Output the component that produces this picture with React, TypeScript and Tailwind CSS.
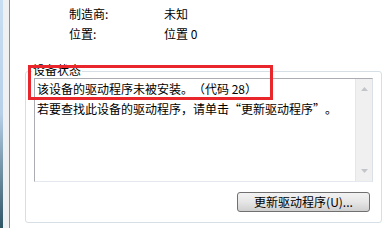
import React from 'react';

const font = { fontFamily: '"SimSun", "Noto Sans CJK SC", sans-serif' };

function ScrollArrow({ up }: { up?: boolean }) {
    return (
        <svg width="7" height="4" viewBox="0 0 7 4" className="block">
            {up ? <path d="M0 4 L3.5 0 L7 4 Z" fill="#c2c5c9" /> : <path d="M0 0 L3.5 4 L7 0 Z" fill="#c2c5c9" />}
        </svg>
    );
}

export default function App() {
    return (
        <div className="relative w-[387px] h-[228px] overflow-hidden bg-white flex text-[12px] leading-[12px] text-black [text-spacing-trim:space-all]" style={font}>
            {/* left window edge */}
            <div className="w-[3px] h-full bg-gradient-to-b from-[#c9def2] via-[#b7d0e8] to-[#2f5565]" />
            <div className="w-[6px] h-full bg-[#eef0f2]" />
            <div className="w-px h-full bg-[#8a8f94]" />

            <div className="flex-1 flex flex-col">
                {/* properties */}
                <div className="pt-[8px] pl-[59px] flex flex-col gap-[8px]">
                    <div className="flex">
                        <span className="w-[95px]">制造商:</span>
                        <span>未知</span>
                    </div>
                    <div className="flex">
                        <span className="w-[95px]">位置:</span>
                        <span>位置 0</span>
                    </div>
                </div>

                {/* device status group */}
                <div className="relative ml-[15px] mt-[31px] w-[357px] h-[152px] border border-[#d5dfe5] rounded-[3px] px-[8px] pt-[6px]">
                    <div className="absolute left-[6px] top-[-8px] bg-white px-[1px]">设备状态</div>
                    <div className="flex h-[104px] border border-[#abadb3] border-b-[#e3e9ef] border-r-[#dbdfe6]">
                        <div className="flex-1 pl-[2px] pt-[4px]">
                            <div>该设备的驱动程序未被安装。（代码 28）</div>
                            <div className="mt-[8px]">若要查找此设备的驱动程序，请单击“更新驱动程序”。</div>
                        </div>
                        <div className="w-[17px] h-full bg-[#f0f0f0] border-l border-[#e6e6e6] flex flex-col items-center justify-between py-[8px]">
                            <ScrollArrow up />
                            <ScrollArrow />
                        </div>
                    </div>
                    <div className="flex justify-end pr-[3px] mt-[10px]">
                        <button className="w-[133px] h-[20px] border border-[#707070] rounded-[3px] bg-gradient-to-b from-[#f2f2f2] via-[#e6e6e6] to-[#cfcfcf] flex items-center justify-center text-[12px]" style={font}>
                            更新驱动程序(U)...
                        </button>
                    </div>
                </div>
            </div>

            {/* red annotation */}
            <div className="absolute left-[28px] top-[65px] w-[245px] h-[35px] border-[3px] border-[#e8262c]" />
        </div>
    );
}
